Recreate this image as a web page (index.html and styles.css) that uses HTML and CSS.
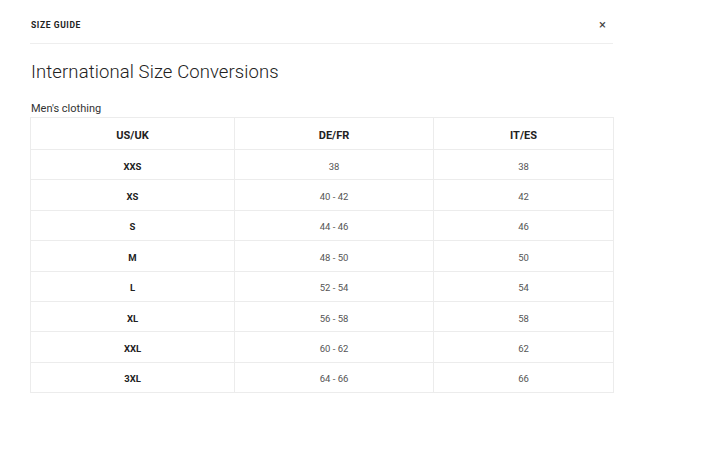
FILE: index.html
```html
<!DOCTYPE html>
<html>
<head>
<meta charset="utf-8">
<link rel="stylesheet" href="styles.css">
</head>
<body>
<div class="modal">
  <div class="modal-header">
    <span class="modal-title">SIZE GUIDE</span>
    <span class="close">&times;</span>
  </div>
  <h1 class="heading">International Size Conversions</h1>
  <div class="caption">Men's clothing</div>
  <table class="sizes">
    <colgroup><col class="c1"><col class="c2"><col class="c3"></colgroup>
    <thead>
      <tr><th>US/UK</th><th>DE/FR</th><th>IT/ES</th></tr>
    </thead>
    <tbody>
      <tr><th>XXS</th><td>38</td><td>38</td></tr>
      <tr><th>XS</th><td>40 - 42</td><td>42</td></tr>
      <tr><th>S</th><td>44 - 46</td><td>46</td></tr>
      <tr><th>M</th><td>48 - 50</td><td>50</td></tr>
      <tr><th>L</th><td>52 - 54</td><td>54</td></tr>
      <tr><th>XL</th><td>56 - 58</td><td>58</td></tr>
      <tr><th>XXL</th><td>60 - 62</td><td>62</td></tr>
      <tr><th>3XL</th><td>64 - 66</td><td>66</td></tr>
    </tbody>
  </table>
</div>
</body>
</html>
```
FILE: styles.css
```css
html, body {
  margin: 0;
  padding: 0;
  background: #fff;
}
body {
  font-family: Roboto, "Liberation Sans", sans-serif;
  color: #222;
}
.modal {
  width: 583px;
  margin-left: 30px;
}
.modal-header {
  display: flex;
  justify-content: space-between;
  align-items: flex-start;
  height: 44px;
  padding: 20px 0 0 1px;
  box-sizing: border-box;
  border-bottom: 1px solid #eee;
}
.modal-title {
  font-size: 8.5px;
  font-weight: 700;
  letter-spacing: 0.6px;
  line-height: 10px;
  color: #222;
}
.close {
  font-size: 13px;
  color: #444;
  margin-right: 7px;
  line-height: 10px;
}
.heading {
  margin: 16px 0 0 1px;
  font-size: 18.5px;
  font-weight: 300;
  line-height: 24px;
  color: #222;
  letter-spacing: 0.1px;
}
.caption {
  margin: 17px 0 0 1px;
  font-size: 11px;
  line-height: 16px;
  color: #333;
}
.sizes {
  margin-top: 0;
  width: 583px;
  border-collapse: collapse;
  table-layout: fixed;
  font-size: 10px;
}
.c1 { width: 204px; }
.c2 { width: 199px; }
.c3 { width: 180px; }
.sizes th, .sizes td {
  border: 1px solid #ececec;
  text-align: center;
  padding: 3px 0 0;
}
.sizes thead th {
  height: 28px;
  font-size: 11px;
  font-weight: 700;
  color: #222;
}
.sizes tbody tr {
  height: 30.4px;
}
.sizes tbody th {
  font-weight: 700;
  font-size: 9.5px;
  color: #222;
}
.sizes td {
  font-weight: 400;
  color: #555;
  font-size: 9.5px;
}
```
